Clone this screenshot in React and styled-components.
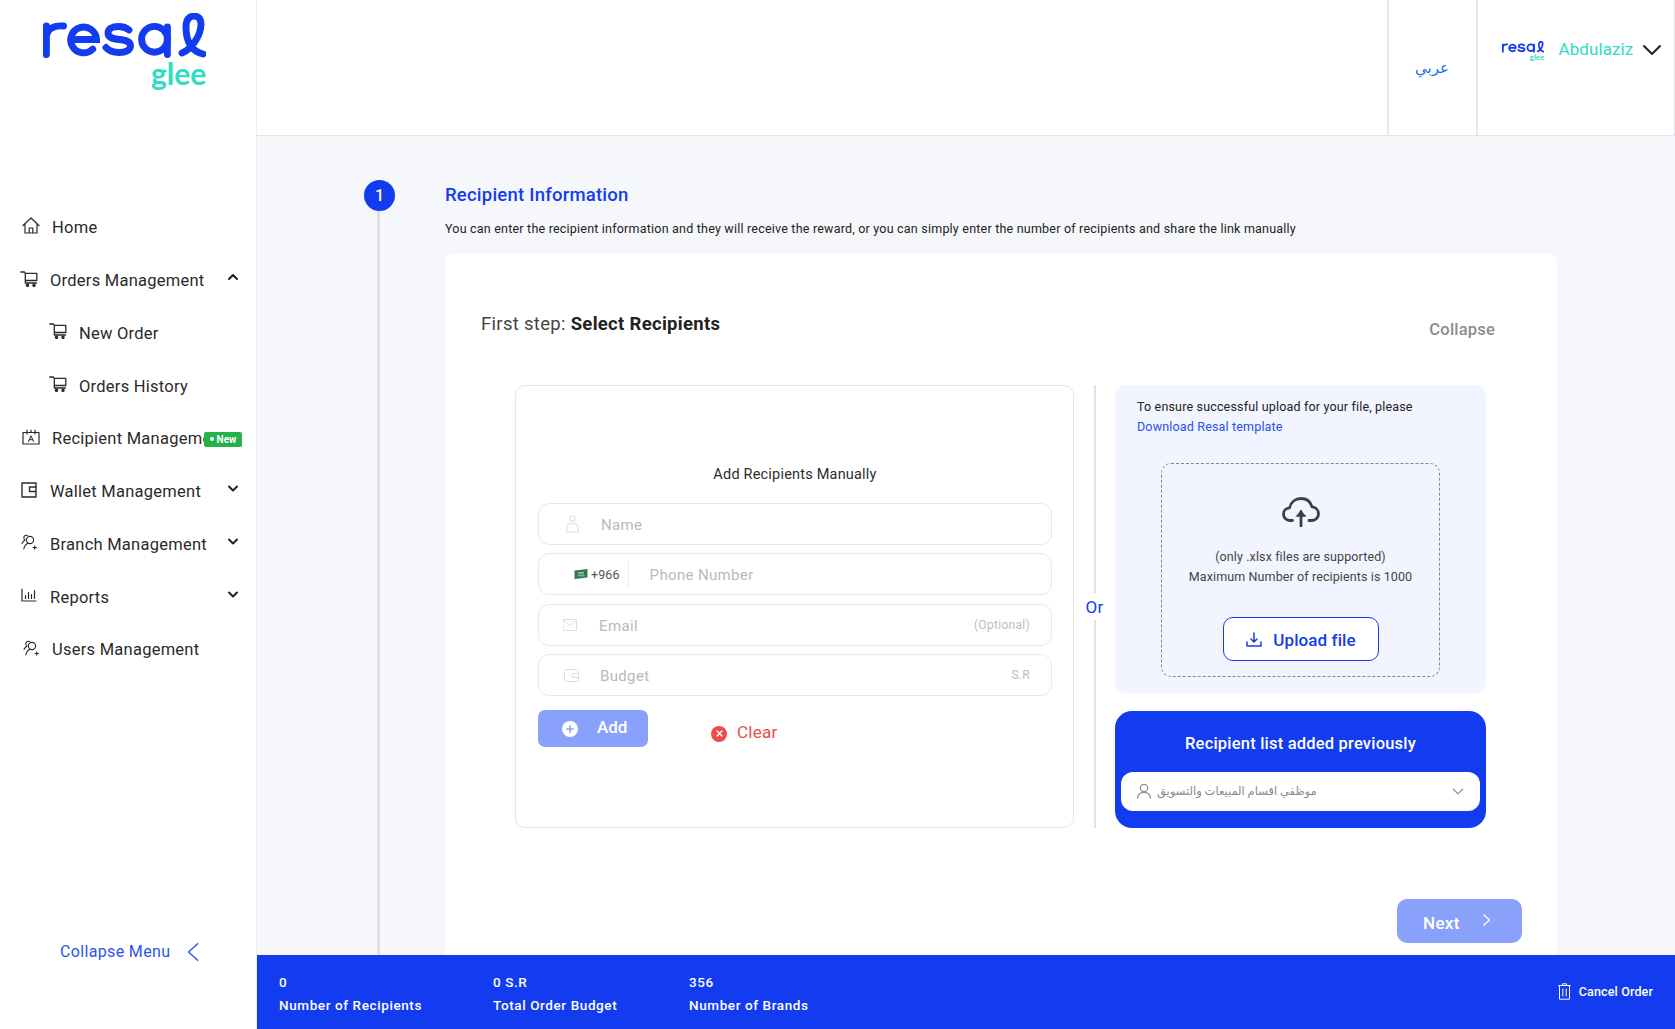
import React from "react";
import styled, { createGlobalStyle } from "styled-components";

const BLUE = "#133cf1";
const SOFT = "#8aa1fb";
const TEAL = "#2fdcc4";
const INK = "#2b2b2b";
const FONT = `Roboto, "DejaVu Sans", sans-serif`;

const Global = createGlobalStyle`
  html, body { margin: 0; padding: 0; height: 100%; overflow: hidden; background: #f6f7fb; }
  body { font-family: ${FONT}; color: ${INK}; }
  * { box-sizing: border-box; }
`;

const Shell = styled.div`
  display: grid;
  grid-template-columns: 257px 1fr;
  width: 1675px;
  height: 1029px;
`;

/* ---------- sidebar ---------- */
const Sidebar = styled.aside`
  display: flex;
  flex-direction: column;
  background: #fff;
  border-right: 1px solid #eceef3;
  height: 100%;
`;
const LogoWrap = styled.div`
  height: 201.5px;
  padding: 13px 0 0 43px;
`;
const Nav = styled.nav`
  display: flex;
  flex-direction: column;
`;
const NavRow = styled.div`
  position: relative;
  display: flex;
  align-items: center;
  height: 52.75px;
  padding-left: ${(p) => p.$pad}px;
  gap: ${(p) => p.$gap}px;
  font-size: 16.5px;
  letter-spacing: 0.25px;
  color: #2a2a2a;
  white-space: nowrap;
`;
const NavIcon = styled.span`
  display: inline-flex;
  width: 18px;
  margin-top: -4px;
  flex: none;
`;
const NavLabel = styled.span`
  max-width: ${(p) => p.$max || 190}px;
  overflow: hidden;
`;
const NavChevron = styled.span`
  position: absolute;
  right: 17px;
  top: 17px;
  display: inline-flex;
  color: #222;
`;
const NewBadge = styled.span`
  position: absolute;
  left: 204px;
  top: 19px;
  width: 38px;
  height: 15px;
  border-radius: 2px;
  background: #23b24b;
  color: #fff;
  font-size: 10px;
  font-weight: 700;
  letter-spacing: 0;
  display: flex;
  align-items: center;
  justify-content: center;
  gap: 3px;
  &::before {
    content: "";
    width: 4px;
    height: 4px;
    border-radius: 50%;
    background: #fff;
  }
`;
const CollapseMenu = styled.div`
  margin-top: auto;
  margin-bottom: 66px;
  padding-left: 60px;
  display: flex;
  align-items: center;
  gap: 13px;
  font-size: 16px;
  letter-spacing: 0.35px;
  line-height: 20px;
  color: #2c55e8;
`;

/* ---------- main column ---------- */
const Main = styled.main`
  display: flex;
  flex-direction: column;
  height: 1029px;
  min-width: 0;
`;
const Header = styled.header`
  height: 136px;
  flex: none;
  background: #fff;
  border-bottom: 1px solid #e4e5ea;
  border-right: 1px solid #e4e5ea;
  display: flex;
  justify-content: flex-end;
`;
const LangCell = styled.div`
  width: 89px;
  border-left: 2px solid #e8e8ec;
  display: flex;
  align-items: center;
  justify-content: center;
  font-size: 15px;
  color: #1c6df0;
`;
const UserCell = styled.div`
  width: 198.5px;
  border-left: 2px solid #e8e8ec;
  display: flex;
  align-items: flex-start;
  padding: 41px 0 0 24px;
`;
const UserName = styled.span`
  margin: -1px 7px 0 15px;
  font-size: 17px;
  line-height: 18px;
  letter-spacing: 0.1px;
  color: ${TEAL};
`;
const UserChevron = styled.span`
  display: inline-flex;
  margin-top: -4px;
  color: #222;
`;

const Content = styled.div`
  flex: 1;
  min-height: 0;
  overflow: hidden;
  display: grid;
  grid-template-columns: 31px 1112px;
  column-gap: 50px;
  padding: 44px 0 0 107px;
`;
const Rail = styled.div`
  display: flex;
  flex-direction: column;
  align-items: center;
`;
const StepDot = styled.div`
  width: 31px;
  height: 31px;
  flex: none;
  border-radius: 50%;
  background: ${BLUE};
  color: #fff;
  font-size: 16px;
  font-weight: 500;
  display: flex;
  align-items: center;
  justify-content: center;
`;
const RailLine = styled.div`
  flex: 1;
  width: 3px;
  margin-right: 2px;
  background: #e0e0e3;
`;
const Step = styled.section`
  display: flex;
  flex-direction: column;
  min-height: 0;
`;
const StepTitle = styled.h2`
  margin: 3px 0 0;
  font-size: 18.5px;
  line-height: 24px;
  font-weight: 500;
  letter-spacing: 0.22px;
  color: ${BLUE};
`;
const StepDesc = styled.p`
  margin: 14px 0 0;
  font-size: 12.5px;
  line-height: 16px;
  letter-spacing: 0.21px;
  color: #222;
  white-space: nowrap;
`;
const Card = styled.div`
  margin-top: 16px;
  flex: 1;
  background: #fff;
  border-radius: 10px 10px 0 0;
  padding: 59px 35px 0 36px;
  min-height: 0;
  overflow: hidden;
`;
const CardHead = styled.div`
  display: flex;
  justify-content: space-between;
  align-items: flex-start;
  padding-right: 27px;
`;
const CardTitle = styled.div`
  font-size: 18.5px;
  line-height: 24px;
  letter-spacing: 0.3px;
  color: #444;
  strong { font-weight: 700; color: #222; }
`;
const CollapseLink = styled.div`
  margin-top: 6px;
  font-size: 16.5px;
  line-height: 24px;
  letter-spacing: 0.2px;
  font-weight: 500;
  color: #8c8c8c;
`;
const Split = styled.div`
  margin: 42.5px 36px 0 34px;
  display: grid;
  grid-template-columns: 559px 41px 371px;
  height: 443px;
`;

/* manual box */
const ManualBox = styled.div`
  border: 1px solid #e6e6e9;
  border-radius: 10px;
  padding: 79px 21px 0 22px;
  display: flex;
  flex-direction: column;
`;
const ManualTitle = styled.div`
  text-align: center;
  font-size: 14.5px;
  line-height: 20px;
  font-weight: 400;
  letter-spacing: 0.2px;
  color: #2d2d2d;
  margin-bottom: 18px;
`;
const Fields = styled.div`
  display: flex;
  flex-direction: column;
  gap: 8.67px;
`;
const Field = styled.div`
  height: 42px;
  border: 1px solid #e9e9ec;
  border-radius: 11px;
  display: flex;
  align-items: center;
  padding: 0 21px 0 ${(p) => p.$pad}px;
  gap: ${(p) => p.$gap}px;
`;
const FieldIcon = styled.span`
  display: inline-flex;
  flex: none;
  color: #dddde0;
`;
const Placeholder = styled.span`
  flex: 1;
  padding-top: 2px;
  font-size: 15px;
  letter-spacing: 0.35px;
  color: #b9b9bc;
`;
const PhonePlaceholder = styled(Placeholder)`
  margin-left: 18px;
`;
const FieldHint = styled.span`
  font-size: 12px;
  letter-spacing: 0.3px;
  color: #bcbcbf;
`;
const DialCode = styled.span`
  font-size: 12.5px;
  letter-spacing: 0.1px;
  color: #555;
  padding-right: 8px;
  line-height: 27px;
  border-right: 1px solid #ececef;
`;
const Actions = styled.div`
  margin-top: 14px;
  display: flex;
  align-items: flex-start;
  gap: 63px;
`;
const AddButton = styled.button`
  width: 110px;
  height: 37px;
  border: 0;
  border-radius: 7px;
  background: ${SOFT};
  color: #fff;
  font-family: ${FONT};
  font-size: 17px;
  font-weight: 500;
  letter-spacing: 0;
  padding: 0 0 4px 24px;
  display: flex;
  align-items: center;
  gap: 19px;
`;
const AddDot = styled.span`
  width: 16px;
  height: 16px;
  border-radius: 50%;
  background: #fff;
  color: ${SOFT};
  margin-top: 4px;
  display: inline-flex;
  align-items: center;
  justify-content: center;
`;
const ClearLink = styled.div`
  display: flex;
  align-items: center;
  gap: 10px;
  margin-top: 12px;
  font-size: 17px;
  line-height: 20px;
  letter-spacing: 0.25px;
  color: #ea4d4d;
`;
const ClearDot = styled.span`
  width: 16px;
  height: 16px;
  margin-top: 3px;
  border-radius: 50%;
  background: #ea4d4d;
  color: #fff;
  display: inline-flex;
  align-items: center;
  justify-content: center;
`;

/* divider */
const OrColumn = styled.div`
  display: flex;
  flex-direction: column;
  align-items: center;
`;
const OrLine = styled.div`
  flex: 1;
  width: 2px;
  background: #e2e2e5;
`;
const OrText = styled.div`
  height: 27px;
  line-height: 29px;
  font-size: 17px;
  letter-spacing: 0.3px;
  color: ${BLUE};
`;

/* right column */
const RightCol = styled.div`
  display: flex;
  flex-direction: column;
  gap: 18px;
`;
const UploadPanel = styled.div`
  height: 308px;
  flex: none;
  background: #f2f5ff;
  border-radius: 10px;
  padding: 12px 22px 0;
`;
const UploadNote = styled.div`
  font-size: 12.5px;
  line-height: 20px;
  letter-spacing: 0.17px;
  color: #222;
`;
const TemplateLink = styled.div`
  color: #2450ee;
`;
const DropZone = styled.div`
  margin: 26px 24px 0;
  height: 214px;
  border: 1px dashed #858790;
  border-radius: 10px;
  display: flex;
  flex-direction: column;
  align-items: center;
  padding-top: 33px;
  color: #3f3f42;
`;
const DropText = styled.div`
  margin-top: 20px;
  text-align: center;
  font-size: 12.5px;
  line-height: 20px;
  letter-spacing: 0.11px;
  color: #444;
`;
const UploadButton = styled.button`
  margin-top: 30px;
  width: 156px;
  height: 44px;
  background: #fff;
  border: 1px solid ${BLUE};
  border-radius: 10px;
  color: ${BLUE};
  font-family: ${FONT};
  font-size: 17px;
  font-weight: 500;
  letter-spacing: 0.1px;
  display: flex;
  align-items: center;
  justify-content: center;
  gap: 11px;
  padding: 2px 0 0 1px;
`;
const ListPanel = styled.div`
  flex: 1;
  background: ${BLUE};
  border-radius: 17px;
  padding: 21px 6px 0;
`;
const ListTitle = styled.div`
  text-align: center;
  color: #fff;
  font-size: 16.5px;
  line-height: 24px;
  font-weight: 500;
  letter-spacing: 0.2px;
`;
const ListSelect = styled.div`
  margin-top: 16px;
  height: 39px;
  background: #fff;
  border-radius: 12px;
  display: flex;
  align-items: center;
  padding: 0 15px;
  gap: 5px;
  color: #8d8d8d;
`;
const ListValue = styled.span`
  flex: 1;
  font-size: 11.5px;
  color: #8a8a8a;
`;
const NextRow = styled.div`
  margin-top: 71px;
  display: flex;
  justify-content: flex-end;
`;
const NextButton = styled.button`
  width: 125px;
  height: 44px;
  border: 0;
  border-radius: 10px;
  background: ${SOFT};
  color: #fff;
  font-family: ${FONT};
  font-size: 17px;
  font-weight: 500;
  letter-spacing: 0.35px;
  display: flex;
  align-items: center;
  padding: 4px 0 0 26px;
  gap: 19px;
`;
const NextArrow = styled.span`
  display: inline-flex;
  margin-top: -5px;
`;

/* footer */
const Footer = styled.footer`
  height: 74px;
  flex: none;
  background: ${BLUE};
  color: #fff;
  display: flex;
  align-items: center;
  padding: 3px 22px 0 22px;
  font-size: 13.5px;
  font-weight: 500;
  letter-spacing: 0.6px;
`;
const Stat = styled.div`
  width: ${(p) => p.$w}px;
  line-height: 23px;
`;
const CancelOrder = styled.div`
  margin-left: auto;
  margin-top: -5px;
  display: flex;
  align-items: center;
  gap: 8px;
  font-size: 12.5px;
  letter-spacing: 0.15px;
`;

/* ---------- drawings ---------- */
const Logo = ({ width = 163, glee = 30 }) => (
  <svg width={width} viewBox="0 0 163 78" fill="none" aria-label="resal glee">
    <g stroke={BLUE} strokeWidth="6.9" strokeLinecap="round">
      <path d="M3.4 13v28.6M3.4 25C3.4 16 10 12.2 20.5 13" />
      <path d="M28.5 26.5h25a12.9 12.9 0 1 0-3.8 9.6" />
      <path d="M86 17c-3-2.6-6.6-3.5-10.5-3.5-6.500 0-10.500 2.500-10.500 6.500 0 10.500 22.500 2.500 22.500 13 0 4-4.500 6.500-11.500 6.500-5 0-10-1.500-13-5" />
      <circle cx="111.5" cy="26.3" r="12.9" />
      <path d="M124.4 14v27.5M139 40c8-3 19-16 19-29 0-5.500-3-8-7-8-5 0-8 4-8 11 0 14 5 24 17 27" />
    </g>
    <text x="108" y="72" fontFamily="Lato, sans-serif" fontWeight="700" fontSize={glee} fill={TEAL}>glee</text>
  </svg>
);

const line = { fill: "none", stroke: "currentColor", strokeLinecap: "round", strokeLinejoin: "round" };

const HomeIcon = () => (
  <svg width="18" height="17" viewBox="0 0 18 17" {...line} strokeWidth="1.2">
    <path d="M1 8.500 9 1l8 7.500M3 7v9h12V7M7.200 16v-5h3.600v5" />
  </svg>
);
const CartIcon = () => (
  <svg width="18" height="16" viewBox="0 0 18 16" {...line} strokeWidth="1.3">
    <path d="M.8 1h3.700l.8 1.300V12h11.200M5.300 2.300h11.500V9.500H5.300" />
    <circle cx="7.500" cy="14.300" r="1.100" fill="currentColor" />
    <circle cx="14" cy="14.300" r="1.100" fill="currentColor" />
  </svg>
);
const RecipientIcon = () => (
  <svg width="18" height="16" viewBox="0 0 18 16" {...line} strokeWidth="1.2">
    <path d="M1 3.500h16V15H1zM5 1v4M13 1v4M9 1v2" />
    <path d="M6.500 12.500 9 6.800l2.500 5.700M7.400 10.700h3.200" strokeWidth="1" />
  </svg>
);
const WalletIcon = () => (
  <svg width="16" height="16" viewBox="0 0 16 16" {...line} strokeWidth="1.4">
    <path d="M1 1h14v14H1zM15 5H8.500v4.500H15" />
  </svg>
);
const PeopleIcon = () => (
  <svg width="16" height="16" viewBox="0 0 16 16" {...line} strokeWidth="1.1">
    <circle cx="9" cy="6" r="3.600" />
    <path d="M2.800 15c.6-3 2.500-5 4-5.700M6.500 1.500C5 .8 3.200 1.500 2.900 3.200c-.2 1 .2 2.100 1.100 2.700-1.500.8-2.600 2-3 3.600M12 13.500h3.500M13.700 11.800v3.400" />
  </svg>
);
const ChartIcon = () => (
  <svg width="16" height="14" viewBox="0 0 16 14" {...line} strokeWidth="1.2">
    <path d="M1 1v12h14M4.500 10.500V7.500M7.500 10.500V4.500M10.500 10.500V6.500M13.500 10.500V2.500" />
  </svg>
);
const Chevron = ({ dir = "down", size = 12, sw = 2 }) => {
  const d = { down: "M2 4.500 6 8.500l4-4", up: "M2 8 6 4l4 4", left: "M8 1.500 3 6l5 4.500", right: "M4 1.500 9 6l-5 4.500" }[dir];
  return (
    <svg width={size} height={size} viewBox="0 0 12 12" {...line} strokeWidth={sw}>
      <path d={d} />
    </svg>
  );
};
const PersonIcon = () => (
  <svg width="16" height="16" viewBox="0 0 16 16" {...line} strokeWidth="1.2">
    <circle cx="8" cy="5" r="3.700" />
    <path d="M1.500 15c.4-3.500 3-5.700 6.500-5.700s6.100 2.200 6.500 5.700" />
  </svg>
);
const NameIcon = () => (
  <svg width="13" height="18" viewBox="0 0 13 18" {...line} strokeWidth="1.1">
    <circle cx="6.500" cy="3.500" r="2.800" />
    <path d="M.8 17v-4c0-3 2.500-4.500 5.700-4.500s5.700 1.500 5.700 4.500v4z" />
  </svg>
);
const MailIcon = () => (
  <svg width="14" height="12" viewBox="0 0 14 12" {...line} strokeWidth="1">
    <path d="M.5.500h13v11H.5zM.5 1 7 6.500 13.500 1" />
  </svg>
);
const BudgetIcon = () => (
  <svg width="15" height="13" viewBox="0 0 15 13" {...line} strokeWidth="1">
    <rect x=".5" y=".5" width="14" height="12" rx="2" />
    <path d="M14.500 4.500H10a2 2 0 0 0 0 4h4.500" />
  </svg>
);
const Flag = () => (
  <svg width="14" height="10" viewBox="0 0 13 10" style={{ flex: "none" }}>
    <path d="M0 1.500 13 0v8.500L0 10z" fill="#2a7a4f" />
    <path d="M3.500 3.500h6M3.500 5h6M3 6.800h7" stroke="#cfe5d8" strokeWidth=".7" />
  </svg>
);
const CloudIcon = () => (
  <svg width="38" height="30" viewBox="0 0 38 30" {...line} strokeWidth="2.8">
    <path d="M10.500 23.500H8C4 23.500 1.500 20.500 1.500 17s2.800-6 6-6.200C8.800 5 13.500 1.500 19 1.500c5.300 0 9.500 3.200 11 8.300 3.700.4 6.500 3.400 6.500 7 0 3.800-2.900 6.700-6.500 6.700h-3" />
    <path d="M19 29V14.500" />
    <path d="M14.600 19 19 14l4.400 5z" fill="currentColor" strokeWidth="1" />
  </svg>
);
const DownloadIcon = () => (
  <svg width="16" height="15" viewBox="0 0 16 15" {...line} strokeWidth="1.5">
    <path d="M8 1v8.500M5 7l3 3 3-3M1 10v4h14v-4" />
  </svg>
);
const TrashIcon = () => (
  <svg width="13" height="17" viewBox="0 0 13 17" {...line} strokeWidth="1">
    <path d="M.8 2.500h11.400M4.500 2.500V.8h4v1.700M1.500 2.500V16.200h10V2.500M4.800 6v7M8.200 6v7" />
  </svg>
);
const PlusIcon = () => (
  <svg width="8" height="8" viewBox="0 0 8 8" {...line} strokeWidth="1.5"><path d="M4 .8v6.400M.8 4h6.400" /></svg>
);
const CrossIcon = () => (
  <svg width="7" height="7" viewBox="0 0 7 7" {...line} strokeWidth="1.4"><path d="M1 1l5 5M6 1 1 6" /></svg>
);

const items = [
  { label: "Home", pad: 22, gap: 12, icon: <HomeIcon /> },
  { label: "Orders Management", pad: 20, gap: 12, icon: <CartIcon />, chev: "up" },
  { label: "New Order", pad: 49, gap: 12, icon: <CartIcon /> },
  { label: "Orders History", pad: 49, gap: 12, icon: <CartIcon /> },
  { label: "Recipient Management", pad: 22, gap: 12, icon: <RecipientIcon />, badge: true, max: 152 },
  { label: "Wallet Management", pad: 21, gap: 11, icon: <WalletIcon />, chev: "down" },
  { label: "Branch Management", pad: 21, gap: 11, icon: <PeopleIcon />, chev: "down" },
  { label: "Reports", pad: 21, gap: 11, icon: <ChartIcon />, chev: "down" },
  { label: "Users Management", pad: 23, gap: 11, icon: <PeopleIcon /> },
];

export default function App() {
  return (
    <>
      <Global />
      <Shell>
        <Sidebar>
          <LogoWrap><Logo /></LogoWrap>
          <Nav>
            {items.map((it) => (
              <NavRow key={it.label} $pad={it.pad} $gap={it.gap}>
                <NavIcon>{it.icon}</NavIcon>
                <NavLabel $max={it.max}>{it.label}</NavLabel>
                {it.badge && <NewBadge>New</NewBadge>}
                {it.chev && <NavChevron><Chevron dir={it.chev} /></NavChevron>}
              </NavRow>
            ))}
          </Nav>
          <CollapseMenu>
            Collapse Menu
            <Chevron dir="left" size={22} sw={0.8} />
          </CollapseMenu>
        </Sidebar>

        <Main>
          <Header>
            <LangCell>عربي</LangCell>
            <UserCell>
              <Logo width={42} glee={30} />
              <UserName>Abdulaziz</UserName>
              <UserChevron><Chevron size={24} sw={1} /></UserChevron>
            </UserCell>
          </Header>

          <Content>
            <Rail>
              <StepDot>1</StepDot>
              <RailLine />
            </Rail>
            <Step>
              <StepTitle>Recipient Information</StepTitle>
              <StepDesc>You can enter the recipient information and they will receive the reward, or you can simply enter the number of recipients and share the link manually</StepDesc>
              <Card>
                <CardHead>
                  <CardTitle>First step: <strong>Select Recipients</strong></CardTitle>
                  <CollapseLink>Collapse</CollapseLink>
                </CardHead>
                <Split>
                  <ManualBox>
                    <ManualTitle>Add Recipients Manually</ManualTitle>
                    <Fields>
                      <Field $pad={27} $gap={22}>
                        <FieldIcon><NameIcon /></FieldIcon>
                        <Placeholder>Name</Placeholder>
                      </Field>
                      <Field $pad={35} $gap={3}>
                        <Flag />
                        <DialCode>+966</DialCode>
                        <PhonePlaceholder>Phone Number</PhonePlaceholder>
                      </Field>
                      <Field $pad={24} $gap={22}>
                        <FieldIcon><MailIcon /></FieldIcon>
                        <Placeholder>Email</Placeholder>
                        <FieldHint>(Optional)</FieldHint>
                      </Field>
                      <Field $pad={25} $gap={21}>
                        <FieldIcon><BudgetIcon /></FieldIcon>
                        <Placeholder>Budget</Placeholder>
                        <FieldHint>S.R</FieldHint>
                      </Field>
                    </Fields>
                    <Actions>
                      <AddButton>
                        <AddDot><PlusIcon /></AddDot>
                        Add
                      </AddButton>
                      <ClearLink>
                        <ClearDot><CrossIcon /></ClearDot>
                        Clear
                      </ClearLink>
                    </Actions>
                  </ManualBox>

                  <OrColumn>
                    <OrLine />
                    <OrText>Or</OrText>
                    <OrLine />
                  </OrColumn>

                  <RightCol>
                    <UploadPanel>
                      <UploadNote>
                        To ensure successful upload for your file, please
                        <TemplateLink>Download Resal template</TemplateLink>
                      </UploadNote>
                      <DropZone>
                        <CloudIcon />
                        <DropText>
                          (only .xlsx files are supported)<br />
                          Maximum Number of recipients is 1000
                        </DropText>
                        <UploadButton>
                          <DownloadIcon />
                          Upload file
                        </UploadButton>
                      </DropZone>
                    </UploadPanel>
                    <ListPanel>
                      <ListTitle>Recipient list added previously</ListTitle>
                      <ListSelect>
                        <PersonIcon />
                        <ListValue>موظفي اقسام المبيعات والتسويق</ListValue>
                        <Chevron size={14} sw={1.1} />
                      </ListSelect>
                    </ListPanel>
                  </RightCol>
                </Split>
                <NextRow>
                  <NextButton>
                    Next
                    <NextArrow><Chevron dir="right" size={14} sw={1.1} /></NextArrow>
                  </NextButton>
                </NextRow>
              </Card>
            </Step>
          </Content>

          <Footer>
            <Stat $w={214}>0<br />Number of Recipients</Stat>
            <Stat $w={196}>0 S.R<br />Total Order Budget</Stat>
            <Stat $w={180}>356<br />Number of Brands</Stat>
            <CancelOrder>
              <TrashIcon />
              Cancel Order
            </CancelOrder>
          </Footer>
        </Main>
      </Shell>
    </>
  );
}
